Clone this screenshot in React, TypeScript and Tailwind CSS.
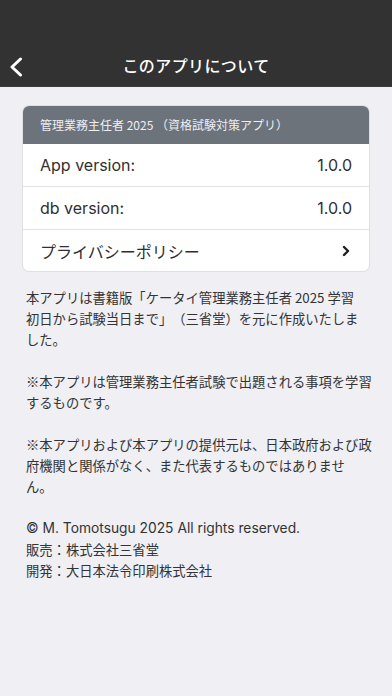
import React from "react";

const jp = { fontFamily: '"Noto Sans CJK JP", "Noto Sans", sans-serif' };
const latin = { fontFamily: 'Inter, "Noto Sans CJK JP", sans-serif' };

export default function App() {
  return (
    <div className="min-h-[696px] w-full bg-[#efeff4] [text-spacing-trim:space-all]" style={jp}>
      <div className="h-[87px] bg-[#323232] pt-[43px] border-b border-[#3c3c3c]">
        <div className="relative h-[44px] flex items-center justify-center">
          <svg
            className="absolute left-[9px] top-[14px]"
            width="14"
            height="20"
            viewBox="0 0 14 20"
            fill="none"
          >
            <path d="M11.5 2 L3 10 L11.5 18" stroke="#ffffff" strokeWidth="3" strokeLinecap="round" strokeLinejoin="round" />
          </svg>
          <span className="text-white text-[16px] font-medium tracking-[0.4px]">このアプリについて</span>
        </div>
      </div>

      <div className="mx-[22px] mt-[18px] rounded-[7px] overflow-hidden border border-[#dedee3] bg-white">
        <div className="h-[38px] bg-[#6c737b] pl-[17px] flex items-center text-[12px] text-[#eceef1]">
          管理業務主任者 2025 （資格試験対策アプリ）
        </div>
        <div className="h-[42px] px-[17px] flex items-center justify-between text-[16px] text-[#2f2f2f]" style={latin}>
          <span>App version:</span>
          <span>1.0.0</span>
        </div>
        <div className="h-[43px] px-[17px] flex items-center justify-between text-[16px] text-[#2f2f2f] border-t border-[#e3e3e6]" style={latin}>
          <span>db version:</span>
          <span>1.0.0</span>
        </div>
        <div className="h-[42px] px-[17px] flex items-center justify-between text-[16px] text-[#2f2f2f] border-t border-[#e3e3e6]">
          <span>プライバシーポリシー</span>
          <svg width="10" height="12" viewBox="0 0 10 12" fill="none" className="mr-[1px]">
            <path d="M3 2 L7 6 L3 10" stroke="#1e1e1e" strokeWidth="2.4" strokeLinecap="round" strokeLinejoin="round" />
          </svg>
        </div>
      </div>

      <div className="px-[26px] mt-[15px] text-[13.3px] leading-[21px] text-[#333333] whitespace-nowrap">
        <p>本アプリは書籍版「ケータイ管理業務主任者 2025 学習</p>
        <p>初日から試験当日まで」（三省堂）を元に作成いたしま</p>
        <p>した。</p>
        <p>&nbsp;</p>
        <p>※本アプリは管理業務主任者試験で出題される事項を学習</p>
        <p>するものです。</p>
        <p>&nbsp;</p>
        <p>※本アプリおよび本アプリの提供元は、日本政府および政</p>
        <p>府機関と関係がなく、また代表するものではありませ</p>
        <p>ん。</p>
        <p>&nbsp;</p>
        <p className="text-[13.8px]" style={latin}>© M. Tomotsugu 2025 All rights reserved.</p>
        <p>販売：株式会社三省堂</p>
        <p>開発：大日本法令印刷株式会社</p>
      </div>
    </div>
  );
}
